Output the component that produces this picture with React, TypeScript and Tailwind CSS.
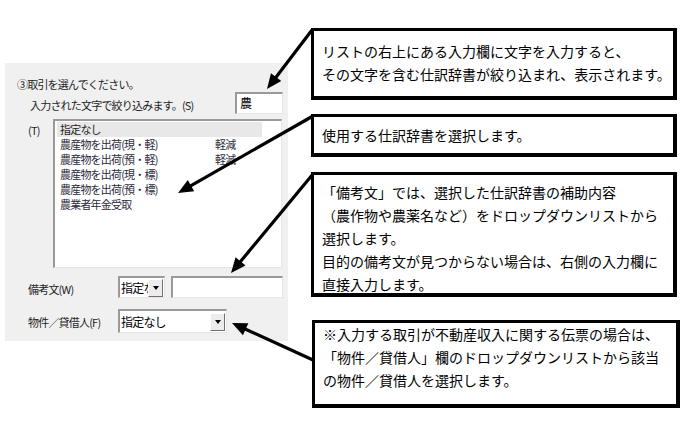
import React from 'react';

type Pt = { x1: number; y1: number; x2: number; y2: number };

// straight pointer line with a filled head at (x2, y2)
const Arrow: React.FC<Pt> = ({ x1, y1, x2, y2 }) => {
  const dx = x2 - x1;
  const dy = y2 - y1;
  const len = Math.hypot(dx, dy);
  const ux = dx / len;
  const uy = dy / len;
  const L = 15;
  const W = 6.5;
  const bx = x2 - ux * L;
  const by = y2 - uy * L;
  return (
    <g>
      <line x1={x1} y1={y1} x2={bx + ux * 3} y2={by + uy * 3} stroke="#000" strokeWidth={3.2} />
      <polygon
        points={`${x2},${y2} ${bx - uy * W},${by + ux * W} ${bx + uy * W},${by - ux * W}`}
        fill="#000"
      />
    </g>
  );
};

const arrows: Pt[] = [
  { x1: 312, y1: 30, x2: 267, y2: 89 },
  { x1: 313, y1: 116, x2: 178, y2: 193 },
  { x1: 313, y1: 174, x2: 231, y2: 273 },
  { x1: 313, y1: 360, x2: 232, y2: 323 },
];

const journalItems: [string, string][] = [
  ['農産物を出荷(現・軽)', '軽減'],
  ['農産物を出荷(預・軽)', '軽減'],
  ['農産物を出荷(現・標)', ''],
  ['農産物を出荷(預・標)', ''],
  ['農業者年金受取', ''],
];

const sunken =
  'bg-white border-t-2 border-l-2 border-b border-r border-t-[#9a9a9a] border-l-[#9a9a9a] border-b-[#e6e6e6] border-r-[#e6e6e6]';

const DropButton: React.FC = () => (
  <div className="w-[15px] h-[18px] mr-[1px] flex items-center justify-center bg-[#ececec] border border-t-white border-l-white border-b-[#707070] border-r-[#707070]">
    <div className="w-0 h-0 border-l-[3px] border-r-[3px] border-t-[4px] border-l-transparent border-r-transparent border-t-black" />
  </div>
);

const Combo: React.FC<{ w: string; h: string; text: string }> = ({ w, h, text }) => (
  <div className={`${w} ${h} ${sunken} flex items-center overflow-hidden`}>
    <div className="flex-1 overflow-hidden whitespace-nowrap pl-[1px] text-[12px] text-black">{text}</div>
    <DropButton />
  </div>
);

const Callout: React.FC<{ className: string; children: React.ReactNode }> = ({ className, children }) => (
  <div
    className={`border-[3px] border-r-[4px] border-b-[4px] border-black bg-white pl-[8px] text-[14px] leading-[23px] text-black whitespace-nowrap ${className}`}
  >
    {children}
  </div>
);

export default function App() {
  return (
    <div className="relative w-[697px] h-[437px] bg-white overflow-hidden flex font-['Noto_Sans_CJK_JP',sans-serif]">
      {/* dialog section */}
      <div className="ml-[5px] mt-[63px] w-[283px] h-[278px] bg-[#f0f0f0] flex flex-col text-[11px] tracking-[-0.8px] text-[#1e1e1e]">
        <div className="pl-[12px] pt-[13px] leading-[16px]">③取引を選んでください。</div>

        <div className="flex items-start">
          <div className="pl-[25px] mt-[5px] leading-[16px]">入力された文字で絞り込みます。(S)</div>
          <div className={`ml-auto mr-[5px] w-[48px] h-[22px] ${sunken} pl-[3px] pt-[1px] text-[12px] leading-[16px] text-black`}>
            農
          </div>
        </div>

        <div className="flex mt-[5px]">
          <div className="pl-[23px] w-[48px] mt-[3px] leading-[16px] shrink-0">(T)</div>
          <div className={`w-[229px] h-[149px] ${sunken} pt-[1px] pl-[2px]`}>
            <div className="w-[205px] h-[15px] bg-[#e8e8e8] pl-[3px] leading-[15px]">指定なし</div>
            {journalItems.map(([name, tag]) => (
              <div key={name} className="flex h-[15px] pl-[3px] leading-[15px] text-[#2a2a3a]">
                <span className="w-[155px]">{name}</span>
                <span>{tag}</span>
              </div>
            ))}
          </div>
        </div>

        <div className="flex items-center mt-[8px]">
          <div className="pl-[23px] w-[113px] shrink-0 pt-[4px]">備考文(W)</div>
          <Combo w="w-[47px]" h="h-[22px]" text="指定なし" />
          <div className={`ml-[6px] w-[112px] h-[22px] ${sunken}`} />
        </div>

        <div className="flex items-center mt-[11px]">
          <div className="pl-[23px] w-[113px] shrink-0 pt-[2px]">物件／貸借人(F)</div>
          <Combo w="w-[109px]" h="h-[24px]" text="指定なし" />
        </div>
      </div>

      {/* explanation boxes */}
      <div className="ml-[23px] mt-[28px] flex flex-col">
        <Callout className="w-[366px] h-[72px] pt-[9px]">
          リストの右上にある入力欄に文字を入力すると、
          <br />
          その文字を含む仕訳辞書が絞り込まれ、表示されます。
        </Callout>
        <Callout className="mt-[14px] w-[366px] h-[43px] flex items-center">使用する仕訳辞書を選択します。</Callout>
        <Callout className="mt-[15px] w-[366px] h-[125px] pt-[6px]">
          「備考文」では、選択した仕訳辞書の補助内容
          <br />
          （農作物や農薬名など）をドロップダウンリストから
          <br />
          選択します。
          <br />
          目的の備考文が見つからない場合は、右側の入力欄に
          <br />
          直接入力します。
        </Callout>
        <Callout className="mt-[23px] ml-[1px] w-[368px] h-[88px] pt-0">
          ※入力する取引が不動産収入に関する伝票の場合は、
          <br />
          「物件／貸借人」欄のドロップダウンリストから該当
          <br />
          の物件／貸借人を選択します。
        </Callout>
      </div>

      <svg className="absolute inset-0 pointer-events-none" width={697} height={437} viewBox="0 0 697 437">
        {arrows.map((a, i) => (
          <Arrow key={i} {...a} />
        ))}
      </svg>
    </div>
  );
}
